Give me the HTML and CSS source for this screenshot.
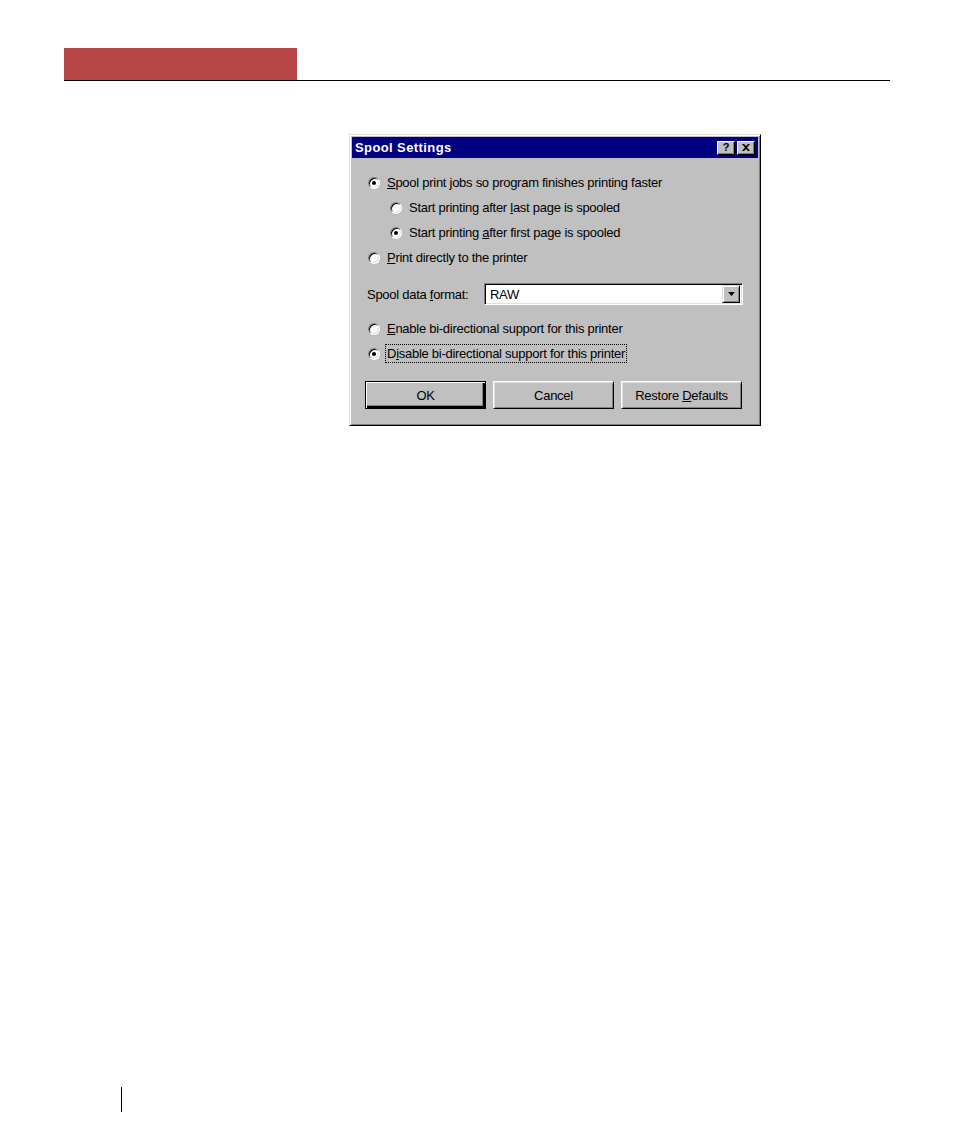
FILE: index.html
```html
<!DOCTYPE html>
<html>
<head>
<meta charset="utf-8">
<link rel="stylesheet" href="styles.css">
</head>
<body>
<div class="page">
  <header class="header">
    <div class="tab"></div>
  </header>

  <div class="dialog">
    <div class="titlebar">
      <span class="title">Spool Settings</span>
      <div class="tbtns">
        <span class="tbtn help">?</span>
        <span class="tbtn close"><svg width="8" height="7" viewBox="0 0 8 7"><path d="M0 0h2l2 2 2-2h2L5 3.5 8 7H6L4 5 2 7H0l3-3.5z" fill="#000"/></svg></span>
      </div>
    </div>
    <div class="content">
      <div class="row"><span class="radio on"></span><span class="lbl"><u>S</u>pool print jobs so program finishes printing faster</span></div>
      <div class="row sub"><span class="radio"></span><span class="lbl">Start printing after <u>l</u>ast page is spooled</span></div>
      <div class="row sub"><span class="radio on"></span><span class="lbl">Start printing <u>a</u>fter first page is spooled</span></div>
      <div class="row"><span class="radio"></span><span class="lbl"><u>P</u>rint directly to the printer</span></div>

      <div class="combo-row">
        <span class="combo-lbl">Spool data <u>f</u>ormat:</span>
        <div class="combo">
          <span class="combo-val">RAW</span>
          <span class="drop"><svg width="7" height="4" viewBox="0 0 7 4"><path d="M0 0h7L3.5 4z" fill="#000"/></svg></span>
        </div>
      </div>

      <div class="row first"><span class="radio"></span><span class="lbl"><u>E</u>nable bi-directional support for this printer</span></div>
      <div class="row"><span class="radio on"></span><span class="lbl focus">D<u>i</u>sable bi-directional support for this printer</span></div>

      <div class="buttons">
        <span class="btn default"><span>OK</span></span>
        <span class="btn"><span>Cancel</span></span>
        <span class="btn"><span>Restore <u>D</u>efaults</span></span>
      </div>
    </div>
  </div>

  <footer class="footer"><div class="vline"></div></footer>
</div>
</body>
</html>
```

FILE: styles.css
```css
html, body {
  margin: 0;
  padding: 0;
  background: #fff;
}
.page {
  width: 954px;
  height: 1145px;
  overflow: hidden;
}
.header {
  margin-left: 64px;
  width: 826px;
  padding-top: 48px;
  border-bottom: 1px solid #000;
}
.tab {
  width: 233px;
  height: 32px;
  background: #b54546;
}
.dialog {
  margin-top: 53px;
  margin-left: 349px;
  width: 412px;
  height: 292px;
  box-sizing: border-box;
  background: #c0c0c0;
  border: 1px solid;
  border-color: #dfdfdf #000 #000 #dfdfdf;
  box-shadow: inset 1px 1px 0 #fff, inset -1px -1px 0 #808080;
  padding: 2px;
  font-family: "Liberation Sans", Arial, sans-serif;
  font-size: 13px;
  letter-spacing: -0.27px;
  color: #000;
}
.titlebar {
  height: 21px;
  background: #000080;
  display: flex;
  align-items: center;
  justify-content: space-between;
  padding: 0 3px 0 3px;
}
.title {
  color: #fff;
  font-weight: bold;
  font-size: 13px;
  letter-spacing: 0.4px;
}
.tbtns {
  display: flex;
  gap: 2px;
}
.tbtn {
  width: 18px;
  height: 14px;
  box-sizing: border-box;
  background: #c0c0c0;
  border: 1px solid;
  border-color: #fff #000 #000 #fff;
  box-shadow: inset -1px -1px 0 #808080;
  display: flex;
  align-items: center;
  justify-content: center;
  font-weight: bold;
  font-size: 11px;
  letter-spacing: 0;
  line-height: 1;
}
.content {
  padding: 12px 0 0 13px;
}
.row {
  height: 25px;
  display: flex;
  align-items: center;
  padding-left: 3px;
}
.row.sub {
  padding-left: 25px;
}
.row.first {
  margin-top: 11px;
}
.radio {
  width: 12px;
  height: 12px;
  box-sizing: border-box;
  border-radius: 50%;
  background: #fff;
  border: 1px solid;
  border-color: #808080 #fff #fff #808080;
  box-shadow: inset 1px 1px 0 #000, inset -1px -1px 0 #dfdfdf;
  position: relative;
  flex: none;
}
.radio.on::after {
  content: "";
  position: absolute;
  left: 3px;
  top: 3px;
  width: 4px;
  height: 4px;
  border-radius: 50%;
  background: #000;
}
.lbl {
  margin-left: 7px;
  white-space: nowrap;
}
.lbl.focus {
  margin-left: 5px;
  padding: 1px 1px;
  border: 1px dotted #000;
}
.combo-row {
  margin-top: 13px;
  display: flex;
  align-items: center;
  height: 22px;
  padding-left: 2px;
}
.combo-lbl {
  width: 117px;
}
.combo {
  width: 259px;
  height: 22px;
  box-sizing: border-box;
  background: #fff;
  border: 1px solid;
  border-color: #808080 #fff #fff #808080;
  box-shadow: inset 1px 1px 0 #000, inset -1px -1px 0 #dfdfdf;
  display: flex;
  align-items: center;
  justify-content: space-between;
  padding: 2px;
}
.combo-val {
  padding-left: 3px;
}
.drop {
  width: 18px;
  height: 18px;
  box-sizing: border-box;
  background: #c0c0c0;
  border: 1px solid;
  border-color: #dfdfdf #000 #000 #dfdfdf;
  box-shadow: inset 1px 1px 0 #fff, inset -1px -1px 0 #808080;
  display: flex;
  align-items: center;
  justify-content: center;
}
.buttons {
  margin-top: 15px;
  display: flex;
  gap: 7px;
}
.btn {
  width: 121px;
  height: 28px;
  box-sizing: border-box;
  border: 1px solid;
  border-color: #fff #000 #000 #fff;
  box-shadow: inset 1px 1px 0 #dfdfdf, inset -1px -1px 0 #808080;
  display: flex;
  align-items: center;
  justify-content: center;
  background: #c0c0c0;
  white-space: nowrap;
}
.btn.default {
  border: 1px solid #000;
  box-shadow: inset 1px 1px 0 #fff, inset -2px -2px 0 #000, inset -3px -3px 0 #808080;
}
.footer {
  margin-top: 661px;
  padding-left: 121px;
}
.vline {
  width: 1px;
  height: 25px;
  background: #000;
}
```
